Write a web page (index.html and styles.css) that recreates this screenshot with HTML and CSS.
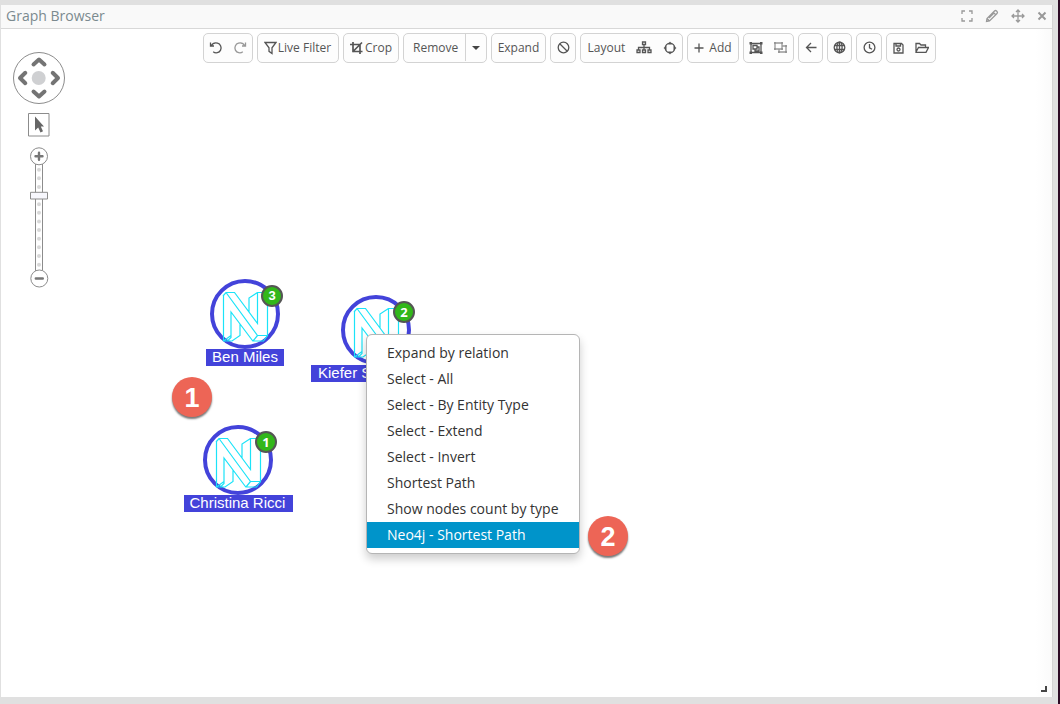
FILE: index.html
```html
<!DOCTYPE html>
<html lang="en">
<head>
<meta charset="utf-8">
<title>Graph Browser</title>
<link rel="stylesheet" href="styles.css">
</head>
<body>
<svg class="defs" aria-hidden="true">
  <symbol id="neo" viewBox="0 0 48 52">
    <path d="M2 5 5 1.5h8.500l23 31V1.500h10v43l-4 5.500H31.800L10 21v25.500L6.500 50H2.500V5M5 1.500 36.500 44.500h10M28 21V7l8.500-5.500M36.500 44.500l-4.500 5.500M19 33v11.500L11 50H6.500M10 44.500 2.500 50"/>
  </symbol>
</svg>
<main class="panel">
  <header class="title">
    <h1>Graph Browser</h1>
    <div class="actions">
      <svg width="12" height="12" viewBox="0 0 12 12"><path d="M1 4V1h3M8 1h3v3M11 8v3H8M4 11H1V8"/></svg>
      <svg width="14" height="14" viewBox="0 0 14 14"><path d="M1.500 12.500 2 9.500 9.500 2q1-1 2 0l.5.500q1 1 0 2L4.500 12zM8.300 3.300l2.400 2.400M2 9.500 4.500 12M4 9l4.500-4.500"/></svg>
      <svg width="14" height="14" viewBox="0 0 14 14"><path d="M7 1v12M1 7h12M5 3l2-2 2 2M5 11l2 2 2-2M3 5 1 7l2 2M11 5l2 2-2 2"/></svg>
      <svg class="close" width="10" height="10" viewBox="0 0 10 10"><path d="m1.500 1.500 7 7m0-7-7 7"/></svg>
    </div>
  </header>
  <nav class="toolbar">
    <div class="group undo">
      <svg width="14" height="14" viewBox="0 0 14 14"><path d="M1.500 1.500V5H5M2 5C3.500 2.500 6 1.500 8.500 2.200a4.900 4.900 0 1 1-4.300 8.600"/></svg>
      <svg class="off" width="14" height="14" viewBox="0 0 14 14"><path d="M12.500 1.500V5H9M12 5C10.500 2.500 8 1.500 5.500 2.200a4.900 4.900 0 1 0 4.300 8.600"/></svg>
    </div>
    <div class="group filter">
      <svg width="13" height="14" viewBox="0 0 13 14"><path d="M1 1.500h11L8 6.800v5.700L5 10.300V6.800z"/></svg><span>Live Filter</span>
    </div>
    <div class="group crop">
      <svg class="heavy" width="13" height="14" viewBox="0 0 13 14"><path d="M3 1v9.500h9.500M0 3.500h10V13M2.500 11 12 1.500"/></svg><span>Crop</span>
    </div>
    <div class="group remove"><span>Remove</span><b class="drop"><i></i></b></div>
    <div class="group expand"><span>Expand</span></div>
    <div class="group ban"><svg width="13" height="13" viewBox="0 0 13 13"><circle cx="6.500" cy="6.500" r="5.300"/><path d="m3 3 7 7"/></svg></div>
    <div class="group layout"><span>Layout</span>
      <svg width="16" height="13" viewBox="0 0 16 13"><path d="M6.500 1h3v2.500h-3zM8 4v5M2.500 9V6.500h11V9M1 9h3v2.500H1zM6.500 9h3v2.500h-3zM12 9h3v2.500h-3z"/></svg>
      <svg width="14" height="14" viewBox="0 0 14 14"><circle cx="7" cy="7" r="4.800"/><path class="dot" d="M7 .5 9 3.500H5zM7 13.500 5 10.500h4zM.5 7 3.500 5v4zM13.500 7 10.500 9V5z"/></svg>
    </div>
    <div class="group add"><svg width="10" height="10" viewBox="0 0 10 10"><path d="M5 .5v9M.5 5h9"/></svg><span>Add</span></div>
    <div class="group objects">
      <svg width="14" height="12" viewBox="0 0 14 12"><path d="M2 1.500h10v9H2zM4 3.500h4v3.500H4zM8 5h2v4H6V7"/><path class="dot" d="M.5 0h2.500v2.500H.5zM11 0h2.500v2.500H11zM.5 9.500H3V12H.5zM11 9.500h2.500V12H11z"/></svg>
      <svg class="off" width="15" height="13" viewBox="0 0 15 13"><path d="M2 2h7v6H2zM9 5h4v6H6V8"/><path class="dot" d="M1 1h2v2H1zM8 1h2v2H8zM1 7h2v2H1zM8 7h2v2H8zM12 4h2v2h-2zM5 10h2v2H5zM12 10h2v2h-2z"/></svg>
    </div>
    <div class="group back"><svg width="12" height="11" viewBox="0 0 12 11"><path d="M11.500 5.500h-10M6 1 1.500 5.500 6 10"/></svg></div>
    <div class="group globe"><svg width="13" height="13" viewBox="0 0 13 13"><circle cx="6.500" cy="6.500" r="5.300"/><ellipse cx="6.500" cy="6.500" rx="2.600" ry="5.300"/><path d="M6.500 1v11M1.800 4.500h9.400M1.800 8.500h9.400"/></svg></div>
    <div class="group clock"><svg width="13" height="13" viewBox="0 0 13 13"><circle cx="6.500" cy="6.500" r="5.400"/><path d="M6.500 3v3.800L9 8.200"/></svg></div>
    <div class="group files">
      <svg width="11" height="12" viewBox="0 0 11 12"><path d="M1 1.500h7.500l1.500 1.500v8H1zM3 1.500V4h4.500V1.500"/><circle cx="5.500" cy="7.500" r="1.500"/></svg>
      <svg width="14" height="12" viewBox="0 0 14 12"><path d="M1 9.500v-8h3.500L6 3h4.500v2.500M1 10l2.500-4.500h10L11 10.300H1z"/></svg>
    </div>
  </nav>
  <section class="canvas">
    <svg class="controls" width="70" height="250" viewBox="0 0 70 250">
      <circle class="line" cx="39" cy="32" r="25.500"/>
      <circle cx="38.700" cy="32" r="7" fill="#cfd0d2"/>
      <path class="chevron" d="m33.500 18.500 5.500-5 5.500 5M33.500 45.500l5.500 5 5.500-5M25.300 26.800 20 32l5.300 5.200M52.700 26.800 58 32l-5.300 5.200"/>
      <path class="line" d="M28.500 67.500h20.500v22.500H28.500z"/>
      <path d="M35 70.500v14l3.200-3 2.300 5 2.500-1.200-2.200-4.800H44z" fill="#666"/>
      <path class="line" d="M35.500 118v107M42.500 118v107"/>
      <path class="dots" d="M39 123.700v95.200"/>
      <path class="line thumb" d="M30.500 146.300h17v6.700h-17z"/>
      <circle class="line" cx="39" cy="110.300" r="8.500"/>
      <circle class="line" cx="39.300" cy="232.500" r="8.500"/>
      <path class="sign" d="M35.500 110.300h7M39 106.800v7M35.800 232.500h7"/>
    </svg>
    <article class="node ben"><div class="ring"><svg><use href="#neo"/></svg></div><b class="count">3</b><span>Ben Miles</span></article>
    <article class="node kiefer"><div class="ring"><svg><use href="#neo"/></svg></div><b class="count">2</b><span>Kiefer S</span></article>
    <article class="node christina"><div class="ring"><svg><use href="#neo"/></svg></div><b class="count">1</b><span>Christina Ricci</span></article>
    <ul class="menu">
      <li>Expand by relation</li>
      <li>Select - All</li>
      <li>Select - By Entity Type</li>
      <li>Select - Extend</li>
      <li>Select - Invert</li>
      <li>Shortest Path</li>
      <li>Show nodes count by type</li>
      <li class="selected">Neo4j - Shortest Path</li>
    </ul>
    <b class="step first">1</b>
    <b class="step second">2</b>
    <i class="grip"></i>
  </section>
</main>
</body>
</html>
```
FILE: styles.css
```css
* { box-sizing: border-box; }
body {
  margin: 0;
  height: 704px;
  overflow: hidden;
  padding: 5px 5px 7px 1px;
  background: #e0e0e0;
  border-right: 2px solid #2c0a24;
  font-family: "Open Sans", "Noto Sans", sans-serif;
}
.defs { position: absolute; width: 0; height: 0; }
svg { display: block; flex: none; fill: none; stroke: #555; stroke-width: 1.3; }
.panel {
  height: 692px;
  display: flex;
  flex-direction: column;
  background: linear-gradient(90deg, #fff calc(100% - 16px), #fafafa);
  border-right: 1px solid #d5d5d5;
}
.title {
  height: 24px;
  flex: none;
  display: flex;
  align-items: center;
  justify-content: space-between;
  padding: 0 4px 0 5px;
  background: #f9f9f9;
  border-bottom: 1px solid #d8d8d8;
}
.title h1 { margin: 0; padding-bottom: 2px; font-size: 14px; font-weight: 400; line-height: 21px; color: #7b8a8f; }
.actions { display: flex; align-items: center; gap: 12px; padding-bottom: 1px; }
.actions svg { stroke: #999; }
.actions .close { stroke-width: 2; margin-right: 1px; }
.toolbar { display: flex; gap: 4px; padding: 4px 0 0 202px; height: 34px; flex: none; }
.group {
  height: 30px;
  flex: none;
  display: flex;
  align-items: center;
  justify-content: center;
  padding-bottom: 1px;
  border: 1px solid #d3d3d3;
  border-radius: 5px;
  background: #fdfdfd;
  color: #555;
  font-size: 12px;
  white-space: nowrap;
}
.off { opacity: .6; }
.heavy { stroke-width: 1.7; }
.dot { fill: #555; stroke: none; }
.undo { width: 50px; gap: 10px; }
.filter { width: 82px; gap: 1px; padding-right: 1px; }
.crop { width: 56px; gap: 2px; }
.remove { width: 84px; justify-content: space-between; padding-left: 9px; }
.drop { width: 21px; height: 27px; border-left: 1px solid #d3d3d3; display: flex; align-items: center; justify-content: center; }
.drop i { border: 4.5px solid transparent; border-top-color: #444; border-bottom: 0; }
.expand { width: 55px; }
.ban { width: 26px; }
.layout { width: 103px; gap: 11px; padding-left: 2px; }
.add { width: 52px; gap: 5px; }
.objects { width: 51px; gap: 10px; }
.back, .globe { width: 25px; }
.clock { width: 26px; }
.files { width: 50px; gap: 11px; }
.canvas { position: relative; flex: 1; }
.controls { margin: -17px 0 0 -1px; }
.controls > * { stroke: none; }
.controls .line { stroke: #8c8c8c; stroke-width: 1; fill: #fff; }
.controls .thumb { fill: #f7f7fd; }
.controls .chevron { stroke: #747474; stroke-width: 4; stroke-linecap: round; stroke-linejoin: round; }
.controls .sign { stroke: #777; stroke-width: 2.4; stroke-linecap: round; }
.controls .dots { stroke: #d8d8d8; stroke-width: 4; stroke-linecap: round; stroke-dasharray: 0 8.630; }
.node { position: absolute; width: 132px; display: flex; flex-direction: column; align-items: center; }
.ring { width: 70px; height: 70px; border: 4px solid #4343da; border-radius: 50%; padding: 8px 7px; background: #fff; }
.ring svg { width: 48px; height: 52px; stroke: #1be3f8; stroke-width: 1.2; }
.node span { height: 17px; padding: 0 6px; background: #4343da; color: #fff; font: 15px/16px "Liberation Sans", sans-serif; white-space: nowrap; }
.count {
  position: absolute;
  left: 82px;
  top: 6px;
  width: 22px;
  height: 22px;
  border: 2px solid #555;
  border-radius: 50%;
  background: #32b71a;
  color: #fff;
  font: bold 13px/18px "Open Sans", sans-serif;
  text-align: center;
}
.ben { left: 178px; top: 216px; }
.ben .count { font-family: "Liberation Sans", sans-serif; }
.kiefer { left: 309px; top: 232px; }
.node.kiefer span { width: 130px; padding-left: 7px; }
.kiefer .count, .christina .count { left: 83px; }
.christina { left: 171px; top: 362px; }
.node.christina span { width: 109px; }
.menu {
  position: absolute;
  left: 365px;
  top: 271px;
  width: 214px;
  height: 220px;
  margin: 0;
  padding: 5px 0;
  list-style: none;
  background: #fff;
  border: 1px solid #b5b5b5;
  border-radius: 6px;
  box-shadow: 0 5px 10px rgba(0,0,0,.2);
  color: #333;
  font-size: 14px;
}
.menu li { height: 26px; line-height: 26px; padding-left: 20px; white-space: nowrap; }
.menu .selected { background: #0094ca; color: #fff; }
.step {
  position: absolute;
  width: 40px;
  height: 40px;
  border-radius: 50%;
  background: #ed6556;
  box-shadow: 0 2px 2px #777;
  color: #fff;
  font: bold 27px/42px "Liberation Sans", sans-serif;
  text-align: center;
}
.first { left: 171px; top: 314px; }
.second { left: 587px; top: 453px; }
.grip { position: absolute; right: 5px; bottom: 5px; width: 6px; height: 6px; border: solid #444; border-width: 0 2px 2px 0; }
```
